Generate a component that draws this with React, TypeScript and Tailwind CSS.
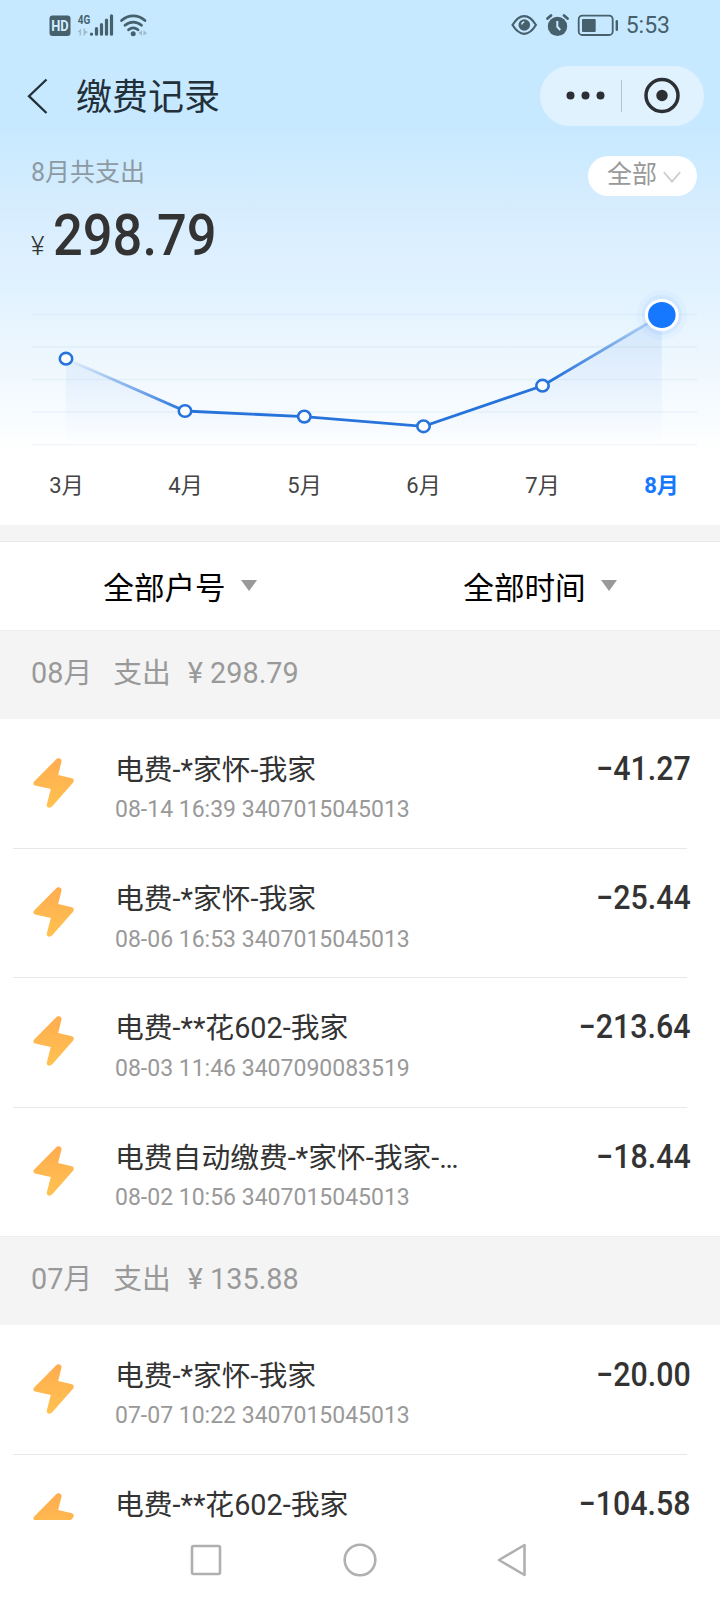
import clsx from 'clsx';

type Point = { month: string; x: number; y: number };
type Item = { title: string; detail?: string; amount: string };
type Group = { month: string; total: string; items: Item[] };

const POINTS: Point[] = [
  { month: '3', x: 66, y: 68.7 },
  { month: '4', x: 185, y: 121 },
  { month: '5', x: 304.3, y: 126.6 },
  { month: '6', x: 423.5, y: 136.3 },
  { month: '7', x: 542.5, y: 95.7 },
  { month: '8', x: 661.8, y: 25 },
];

const GROUPS: Group[] = [
  {
    month: '08',
    total: '298.79',
    items: [
      { title: '电费-*家怀-我家', detail: '08-14 16:39 3407015045013', amount: '41.27' },
      { title: '电费-*家怀-我家', detail: '08-06 16:53 3407015045013', amount: '25.44' },
      { title: '电费-**花602-我家', detail: '08-03 11:46 3407090083519', amount: '213.64' },
      { title: '电费自动缴费-*家怀-我家-…', detail: '08-02 10:56 3407015045013', amount: '18.44' },
    ],
  },
  {
    month: '07',
    total: '135.88',
    items: [
      { title: '电费-*家怀-我家', detail: '07-07 10:22 3407015045013', amount: '20.00' },
      { title: '电费-**花602-我家', amount: '104.58' },
    ],
  },
];

function StatusBar() {
  return (
    <div className="flex h-[50px] items-center justify-between pl-[49px] pr-[50px] text-[#46606c]">
      <svg className="h-6 w-[100px]" viewBox="49 12 100 24" fill="none">
        <rect x="49.5" y="14.5" width="21" height="20.5" rx="3" fill="currentColor" />
        <text x="51.2" y="30" fontSize="14" fontWeight="700" fill="#d5eeff" textLength="17.5" lengthAdjust="spacingAndGlyphs">HD</text>
        <text x="77.8" y="22.8" fontSize="12.5" fontWeight="700" fill="currentColor" textLength="12.5" lengthAdjust="spacingAndGlyphs">4G</text>
        <g stroke="currentColor" strokeWidth="3.2" strokeLinecap="round">
          <path d="M91.5 33v.2M96.5 27.5v5.7M101.5 23.5v9.7M106.5 19v14.2M111.5 14.8v18.4" />
        </g>
        <g fill="#9fbccb">
          <path d="M81 27.5v7h-1.5v-3.5H77.5zM83.5 34.5v-7H85v2l3 1.5-3 2v1.5z" />
          <path d="M138.5 32l3.5-2.8v5.6zM147 32l-3.5-2.8v5.6z" />
        </g>
        <path d="M121.5 19.5c7-6.3 16.5-6.3 23.5 0M125 24.3c5-4.3 11.5-4.3 16.5 0M128.5 28.8c3-2.5 6.5-2.5 9.5 0" stroke="currentColor" strokeWidth="2.7" strokeLinecap="round" />
        <circle cx="133.2" cy="32.7" r="2.5" fill="currentColor" />
      </svg>
      <div className="flex items-center gap-[7px]">
        <svg className="h-6 w-[108px]" viewBox="511 12 108 24" fill="none">
          <path d="M512.5 24c3.5-5.5 7.5-8.8 11.7-8.8s8.3 3.3 11.7 8.8c-3.4 5.5-7.5 8.8-11.7 8.8s-8.2-3.3-11.7-8.8z" stroke="currentColor" strokeWidth="2.2" />
          <circle cx="524.3" cy="24" r="5.8" fill="currentColor" />
          <path d="M521.8 23.5a2.7 2.7 0 0 1 2.5-2.5" stroke="#c8eaff" strokeWidth="1.5" />
          <circle cx="557.5" cy="25.4" r="9.7" fill="currentColor" />
          <path d="M547.5 17.5l3.5-3M567.5 17.5l-3.5-3" stroke="currentColor" strokeWidth="2.8" strokeLinecap="round" />
          <path d="M557.3 20v5.8l3 3.2" stroke="#c8eaff" strokeWidth="2" />
          <rect x="578.7" y="14.7" width="34" height="19.3" rx="3.5" stroke="currentColor" strokeWidth="1.8" />
          <rect x="582" y="18" width="13.7" height="13" rx="1" fill="currentColor" />
          <path d="M616.8 20.2v8.5" stroke="currentColor" strokeWidth="2.4" strokeLinecap="round" />
        </svg>
        <span className="pt-[2px] text-[23px] leading-6">5:53</span>
      </div>
    </div>
  );
}

function NavBar() {
  return (
    <div className="flex h-[92px] items-center pl-[27px] pr-4">
      <svg className="h-9 w-[22px]" viewBox="0 0 22 36" fill="none">
        <path d="M19.5 1.5L2 18.2L19.5 35" stroke="#22303a" strokeWidth="2.3" />
      </svg>
      <h1 className="ml-[27px] pt-[3px] text-[36px] leading-[44px] text-[#22303a]">缴费记录</h1>
      <div className="ml-auto h-[60px] w-[164px] rounded-full bg-[#e1f2ff]">
        <svg className="h-full w-full" viewBox="0 0 164 60" fill="none">
          <g fill="#2c3034">
            <circle cx="30.5" cy="29.5" r="4" />
            <circle cx="45.5" cy="29.5" r="4" />
            <circle cx="60.5" cy="29.5" r="4" />
            <circle cx="122" cy="29.5" r="5.7" />
          </g>
          <path d="M81.5 14v32" stroke="#b4c3d0" />
          <circle cx="122" cy="29.5" r="16" stroke="#2c3034" strokeWidth="3.5" />
        </svg>
      </div>
    </div>
  );
}

function Chart() {
  const line = POINTS.map((p) => `${p.x} ${p.y}`).join(' L');
  const last = POINTS[POINTS.length - 1];

  return (
    <svg className="block h-[160px] w-full" viewBox="0 0 720 160" fill="none">
      <defs>
        <linearGradient id="line" gradientUnits="userSpaceOnUse" x1="66" y1="0" x2="662" y2="0">
          <stop offset="0" stopColor="#2673dc" stopOpacity="0" />
          <stop offset=".2" stopColor="#2673dc" />
          <stop offset=".82" stopColor="#2673dc" />
          <stop offset="1" stopColor="#2673dc" stopOpacity=".15" />
        </linearGradient>
        <linearGradient id="area" x1="0" y1="0" x2="0" y2="1">
          <stop offset="0" stopColor="#2f7be8" stopOpacity=".12" />
          <stop offset="1" stopColor="#2f7be8" stopOpacity="0" />
        </linearGradient>
      </defs>
      {[24.5, 57, 89.5, 122, 154.5].map((y) => (
        <path key={y} d={`M32 ${y}H697`} stroke="#6ea6c8" strokeOpacity=".09" strokeWidth="1.5" />
      ))}
      <path d={`M${line} V154 H66Z`} fill="url(#area)" />
      <path d={`M${line}`} stroke="url(#line)" strokeWidth="2.8" />
      {POINTS.slice(0, -1).map((p) => (
        <ellipse key={p.month} cx={p.x} cy={p.y} rx="6.2" ry="5.8" fill="#fff" stroke="#2673dc" strokeWidth="2.6" />
      ))}
      <circle cx={last.x} cy={last.y} r="25" fill="#1677ff" fillOpacity=".03" />
      <circle cx={last.x} cy={last.y} r="20" fill="#1677ff" fillOpacity=".06" />
      <ellipse cx={last.x} cy={last.y} rx="17" ry="16" fill="#fff" />
      <ellipse cx={last.x} cy={last.y} rx="13.8" ry="13" fill="#1677ff" />
    </svg>
  );
}

function Filter({ label }: { label: string }) {
  return (
    <button className="flex flex-1 items-center justify-center gap-[15px] pt-[5px]">
      <span className="text-[30.6px] leading-10 text-black">{label}</span>
      <svg className="-mt-[6px] h-[11px] w-4" viewBox="0 0 16 11">
        <path d="M0 0h16L8 11z" fill="#999" />
      </svg>
    </button>
  );
}

function Bolt() {
  return (
    <svg className="h-[52px] w-[42px] shrink-0" viewBox="0 0 42 52">
      <defs>
        <linearGradient id="bolt" x1="0" y1="0" x2="0" y2="1">
          <stop offset="0" stopColor="#ffac50" />
          <stop offset="1" stopColor="#ffc250" />
        </linearGradient>
      </defs>
      <path
        d="M23 2.5C25 0 29.2 1.5 28.5 4.5L25.2 18L39 21.2C41.2 22 41.2 24 40 25.7L19.5 49C17 52 13 50.5 13.8 47.5L17.8 32L2 28.5C0 28 0 25.8 1.2 24.5Z"
        fill="url(#bolt)"
      />
    </svg>
  );
}

function Row({ item, first }: { item: Item; first: boolean }) {
  return (
    <div className="h-[129.3px] shrink-0">
      <div className={clsx('ml-[13px] mr-[33px] h-px', !first && 'bg-[#e8e8e8]')} />
      <div className="flex items-start pl-[33px] pr-[29px] pt-[34px]">
        <div className="pt-[3px]">
          <Bolt />
        </div>
        <div className="ml-[40px] flex-1 pt-px">
          <div className="text-[28.8px] leading-[31px] text-[#333]">{item.title}</div>
          {item.detail && <div className="mt-[6.5px] text-[23px] leading-[36px] text-[#999]">{item.detail}</div>}
        </div>
        <div className="-mt-px origin-right scale-x-92 text-[33px] font-medium leading-[31px] text-[#333]">−{item.amount}</div>
      </div>
    </div>
  );
}

export default function App() {
  return (
    <div className="flex h-[1600px] w-[720px] flex-col overflow-hidden bg-white font-[Roboto,'Noto_Sans_CJK_SC',sans-serif]">
      <header className="h-[525px] shrink-0 bg-[linear-gradient(180deg,#c7e9ff_0px,#c7e9ff_130px,#d7edfe_210px,#e1f2ff_290px,#eef7fe_360px,#f6fbff_410px,#fff_450px)]">
        <StatusBar />
        <NavBar />
        <div className="flex h-[148px] items-start justify-between pl-[31px] pr-[23px] pt-[14px]">
          <div>
            <div className="pt-px text-[25px] leading-[32px] text-[#8d9aa3]">8月共支出</div>
            <div className="mt-[14px] flex items-baseline text-[#333]">
              <span className="text-[26px] font-light">¥</span>
              <span className="ml-[9px] origin-left scale-x-92 text-[57px] font-medium leading-[66px]">298.79</span>
            </div>
          </div>
          <button className="flex h-10 w-[109px] items-center rounded-full bg-white pl-[19px]">
            <span className="pb-[2px] text-[25px] leading-8 text-[#999]">全部</span>
            <svg className="ml-[6px] mt-px h-3 w-[18px]" viewBox="0 0 18 12" fill="none">
              <path d="M.8 1L9 10.5L17.2 1" stroke="#ccc" strokeWidth="1.8" />
            </svg>
          </button>
        </div>
        <Chart />
        <div className="ml-[7px] mt-[20px] grid w-[714px] grid-cols-6 text-center text-[22px] leading-8">
          {POINTS.map((p, i) => (
            <span key={p.month} className={i === POINTS.length - 1 ? 'font-bold text-[#1677ff]' : 'text-[#444]'}>
              {p.month}月
            </span>
          ))}
        </div>
      </header>

      <div className="h-[17px] shrink-0 border-b border-[#e8e8e8] bg-[#f4f4f4]" />
      <div className="flex h-[88px] shrink-0">
        <Filter label="全部户号" />
        <Filter label="全部时间" />
      </div>

      <main className="flex h-[890px] shrink-0 flex-col overflow-hidden">
        {GROUPS.map((group) => (
          <section key={group.month} className="shrink-0">
            <div className="flex h-[88.8px] items-center border-t border-[#eee] bg-[#f4f4f4] pb-[3px] pl-[31px] text-[28.8px] text-[#999]">
              <span>{group.month}月</span>
              <span className="ml-[21px]">支出</span>
              <span className="ml-[17px]">¥ {group.total}</span>
            </div>
            {group.items.map((item, i) => (
              <Row key={item.amount} item={item} first={i === 0} />
            ))}
          </section>
        ))}
      </main>

      <nav className="flex h-20 shrink-0 items-center justify-center gap-[118px]">
        <svg className="h-9 w-9" viewBox="0 0 36 36" fill="none" stroke="#b0b0b0" strokeWidth="2.6">
          <rect x="4" y="4" width="28" height="28" rx="1.5" />
        </svg>
        <svg className="h-9 w-9" viewBox="0 0 36 36" fill="none" stroke="#b0b0b0" strokeWidth="2.6">
          <circle cx="18" cy="18" r="15.3" />
        </svg>
        <svg className="h-9 w-9" viewBox="0 0 36 36" fill="none" stroke="#b0b0b0" strokeWidth="2.6" strokeLinejoin="round">
          <path d="M28.5 3v30L3 18z" />
        </svg>
      </nav>
    </div>
  );
}
